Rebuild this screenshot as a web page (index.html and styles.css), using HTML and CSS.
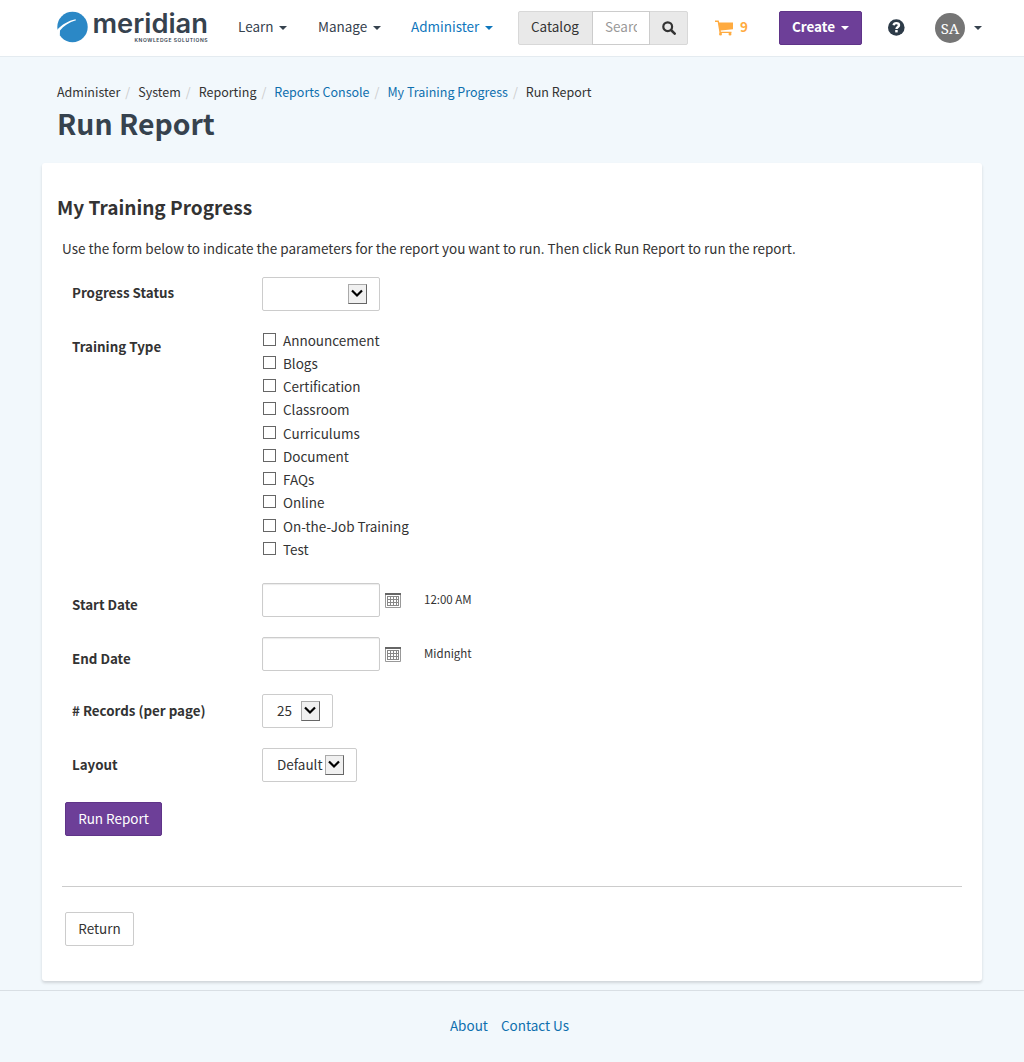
FILE: index.html
```html
<!DOCTYPE html>
<html lang="en">
<head>
<meta charset="utf-8">
<title>Run Report</title>
<link rel="stylesheet" href="styles.css">
</head>
<body>
<header class="navbar">
  <a class="logo">
    <svg width="156" height="34" viewBox="0 0 156 34">
      <circle cx="15.500" cy="15" r="15.200" fill="#2b88c6"/>
      <path d="M0 18C5 12.500 11 8.700 18.500 7.200L19 8.300C12 10.300 6.500 14 3 18.500L2.800 23.500 0 21Z" fill="#fff"/>
      <text class="logo-name" x="35.500" y="21.200" textLength="115.500" lengthAdjust="spacingAndGlyphs">meridian</text>
      <text class="logo-sub" x="77.500" y="30.300" textLength="73" lengthAdjust="spacing">KNOWLEDGE SOLUTIONS</text>
    </svg>
  </a>
  <nav class="menu">
    <a class="menu-item learn">Learn<i class="caret"></i></a>
    <a class="menu-item manage">Manage<i class="caret"></i></a>
    <a class="menu-item administer">Administer<i class="caret"></i></a>
  </nav>
  <div class="search">
    <span class="search-scope">Catalog</span>
    <span class="search-field"><span class="search-hint">Search</span></span>
    <span class="search-button"><svg width="14" height="14" viewBox="0 0 14 14"><circle cx="5.700" cy="5.700" r="4.400" fill="none" stroke="#333" stroke-width="2.200"/><path d="M9 9l3.700 3.700" stroke="#333" stroke-width="2.500" stroke-linecap="round"/></svg></span>
  </div>
  <a class="cart">
    <svg width="18" height="16" viewBox="0 0 18 16"><path d="M0 .5h3.700l.5 2H18v6.700L5.700 10.600l.2 1.200H16.500v1.200H4.500L2.700 2H0z" fill="#ffab40"/><circle cx="5.500" cy="14" r="1.500" fill="#ffab40"/><circle cx="15" cy="14" r="1.500" fill="#ffab40"/></svg>
    <b>9</b>
  </a>
  <button class="create">Create<i class="caret"></i></button>
  <svg class="help" width="17" height="17" viewBox="0 0 17 17"><circle cx="8.300" cy="8.500" r="8.300" fill="#2d3b48"/><path d="M5.600 6.300C5.900 4.600 7 4.100 8.300 4.100 9.800 4.100 11 4.900 11 6.200 11 8 8.500 8 8.500 10" fill="none" stroke="#fff" stroke-width="2.400"/><rect x="7.200" y="11" width="2.500" height="2.400" fill="#fff"/></svg>
  <span class="avatar">SA</span>
  <i class="caret avatar-caret"></i>
</header>
<main class="page">
  <ol class="breadcrumb">
    <li>Administer</li><li>System</li><li>Reporting</li><li><a>Reports Console</a></li><li><a>My Training Progress</a></li><li>Run Report</li>
  </ol>
  <h1>Run Report</h1>
  <section class="card">
    <h2>My Training Progress</h2>
    <p class="intro">Use the form below to indicate the parameters for the report you want to run. Then click Run Report to run the report.</p>
    <div class="row status-row"><label>Progress Status</label><span class="select status"><span></span><i class="drop"><svg width="14" height="10" viewBox="0 0 14 10"><path d="M2 1.500l5 5 5-5" fill="none" stroke="#000" stroke-width="2.200"/></svg></i></span></div>
    <div class="row type-row"><label>Training Type</label>
      <ul class="types">
        <li><i class="box"></i>Announcement</li>
        <li><i class="box"></i>Blogs</li>
        <li><i class="box"></i>Certification</li>
        <li><i class="box"></i>Classroom</li>
        <li><i class="box"></i>Curriculums</li>
        <li><i class="box"></i>Document</li>
        <li><i class="box"></i>FAQs</li>
        <li><i class="box"></i>Online</li>
        <li><i class="box"></i>On-the-Job Training</li>
        <li><i class="box"></i>Test</li>
      </ul>
    </div>
    <div class="row date-row"><label>Start Date</label><span class="input"></span>
      <svg class="calendar" width="16" height="15" viewBox="0 0 16 15"><path d="M.5 1v13.500h15V1" fill="#fff" stroke="#999"/><path d="M0 1h16" stroke="#666" stroke-width="2"/><path d="M2 3h12v10H2z" fill="#888"/><path d="M3 4h2v2H3zM6 4h2v2H6zM9 4h2v2H9zM12 4h1v2h-1zM3 7h2v2H3zM6 7h2v2H6zM9 7h2v2H9zM12 7h1v2h-1zM3 10h2v2H3zM6 10h2v2H6zM9 10h2v2H9zM12 10h1v2h-1z" fill="#fff"/></svg>
      <span class="time">12:00 AM</span></div>
    <div class="row date-row"><label>End Date</label><span class="input"></span>
      <svg class="calendar" width="16" height="15" viewBox="0 0 16 15"><path d="M.5 1v13.500h15V1" fill="#fff" stroke="#999"/><path d="M0 1h16" stroke="#666" stroke-width="2"/><path d="M2 3h12v10H2z" fill="#888"/><path d="M3 4h2v2H3zM6 4h2v2H6zM9 4h2v2H9zM12 4h1v2h-1zM3 7h2v2H3zM6 7h2v2H6zM9 7h2v2H9zM12 7h1v2h-1zM3 10h2v2H3zM6 10h2v2H6zM9 10h2v2H9zM12 10h1v2h-1z" fill="#fff"/></svg>
      <span class="time">Midnight</span></div>
    <div class="row records-row"><label># Records (per page)</label><span class="select records"><span>25</span><i class="drop"><svg width="14" height="10" viewBox="0 0 14 10"><path d="M2 1.500l5 5 5-5" fill="none" stroke="#000" stroke-width="2.200"/></svg></i></span></div>
    <div class="row layout-row"><label>Layout</label><span class="select layout"><span>Default</span><i class="drop"><svg width="14" height="10" viewBox="0 0 14 10"><path d="M2 1.500l5 5 5-5" fill="none" stroke="#000" stroke-width="2.200"/></svg></i></span></div>
    <button class="run">Run Report</button>
    <hr>
    <button class="return">Return</button>
  </section>
</main>
<footer class="footer"><a>About</a><a>Contact Us</a></footer>
</body>
</html>
```
FILE: styles.css
```css
* { box-sizing: border-box; }
body {
  margin: 0;
  height: 1062px;
  overflow: hidden;
  background: #f2f8fc;
  color: #333;
  font: 13.490px/20px "Noto Sans CJK SC", sans-serif;
  white-space: nowrap;
}
i { font-style: normal; }
button { font: inherit; padding: 0 0 2px; display: flex; align-items: center; justify-content: center; }
a { color: #0e6fae; }
.navbar {
  display: flex;
  align-items: center;
  height: 57px;
  padding: 0 0 0 57px;
  background: #fff;
  border-bottom: 1px solid #e4ebf0;
}
.logo { height: 34px; width: 181px; margin-top: 2px; }
.logo svg { display: block; overflow: visible; }
.logo-name { font: 600 26.500px Inter, sans-serif; fill: #36424e; }
.logo-sub { font: 600 5px Inter, sans-serif; fill: #36424e; }
.menu { display: flex; width: 280px; padding-bottom: 4px; }
.menu-item { display: flex; align-items: center; gap: 5.500px; color: #36424e; }
.learn { width: 80px; }
.manage { width: 93px; }
.menu .administer { color: #0e76bc; }
.caret { border: 4px solid transparent; border-top-color: currentColor; border-bottom: 0; margin-top: 4px; }
.search { display: flex; width: 170px; height: 34px; border: 1px solid #d8d8d8; border-radius: 2px; background: #e9e9e9; }
.search-scope { width: 73px; padding: 4px 12px; }
.search-field { width: 58px; margin: -1px 0; padding: 4px 12px; background: #fff; border: 1px solid #ccc; color: #999; }
.search-hint { display: block; overflow: hidden; width: 32px; }
.search-button { flex: 1; display: flex; align-items: center; justify-content: center; padding-bottom: 1px; }
.cart { display: flex; align-items: center; width: 64px; margin-left: 27px; gap: 7px; color: #ffab40; }
.cart b { margin-top: -4px; }
.create { width: 83px; height: 34px; gap: 6px; padding-bottom: 4px; color: #fff; font-weight: 700; background: #6d3f98; border: 1px solid #5f3488; border-radius: 2px; }
.help { margin: -1px 0 0 26px; }
.avatar { width: 30px; height: 30px; margin-left: 30px; border-radius: 50%; background: #757575; color: #fff; font: 15px/30px "Noto Serif", "Liberation Serif", serif; text-align: center; }
.avatar-caret { margin: 0 0 0 9px; color: #36424e; }
.page { padding: 25px 42px 0; }
.breadcrumb { display: flex; margin: 0 0 0 15px; padding: 0; list-style: none; font-size: 12.500px; }
.breadcrumb li + li::before { content: "/"; padding: 0 8px 0 5px; color: #ccc; }
h1 { margin: 4px 0 24px 15px; font-size: 28.350px; line-height: 33px; color: #36424e; }
.card { height: 818px; padding: 33px 20px 0; background: #fff; border-radius: 3px; box-shadow: 0 2px 3px rgba(0,0,0,.14); }
h2 { margin: 0 0 0 -5px; font-size: 19.050px; line-height: 22px; }
.intro { margin: 20px 0 19px; }
.row { display: flex; height: 34px; margin-bottom: 20px; padding-left: 10px; }
.row label { width: 190px; padding-top: 6px; font-size: 13.350px; font-weight: 700; }
.row.records-row label, .row.layout-row label { padding-top: 7px; }
.select { display: flex; align-items: center; justify-content: space-between; height: 34px; padding: 0 12px 0 14px; border: 1px solid #ccc; border-radius: 2px; }
.select > span { padding-bottom: 2px; }
.status { width: 118px; }
.records { width: 71px; }
.layout { width: 95px; }
.drop { display: flex; align-items: center; justify-content: center; width: 19px; height: 20px; background: #f0f0f0; border: 1px solid #aaa; border-right-color: #666; border-bottom-color: #666; }
.drop svg { margin-left: -1px; }
.type-row { height: 232px; }
.types { margin: -3px 0 0; padding: 0; list-style: none; }
.types li { display: flex; align-items: center; height: 23.260px; }
.box { width: 13px; height: 13px; margin: -1px 7px 0 1px; border: 1px solid #666; }
.row.date-row label { padding-top: 12px; }
.input { width: 118px; height: 34px; border: 1px solid #ccc; border-radius: 2px; box-shadow: inset 0 1px 1px rgba(0,0,0,.08); }
.calendar { margin: 10px 23px 0 5px; }
.time { padding-top: 6px; font-size: 11.500px; }
.records-row { margin-top: 23px; }
.run { width: 97px; height: 34px; margin-left: 3px; background: #6d3f98; border: 1px solid #5f3488; border-radius: 2px; color: #fff; }
hr { margin: 50px 0 25px; border: 0; border-top: 1px solid #ccc; }
.return { width: 69px; height: 34px; margin-left: 3px; background: #fff; border: 1px solid #ccc; border-radius: 2px; color: #333; }
.footer { display: flex; justify-content: center; gap: 13px; margin-top: 9px; padding: 24px 5px 0 0; border-top: 1px solid #d9dfe4; }
```
